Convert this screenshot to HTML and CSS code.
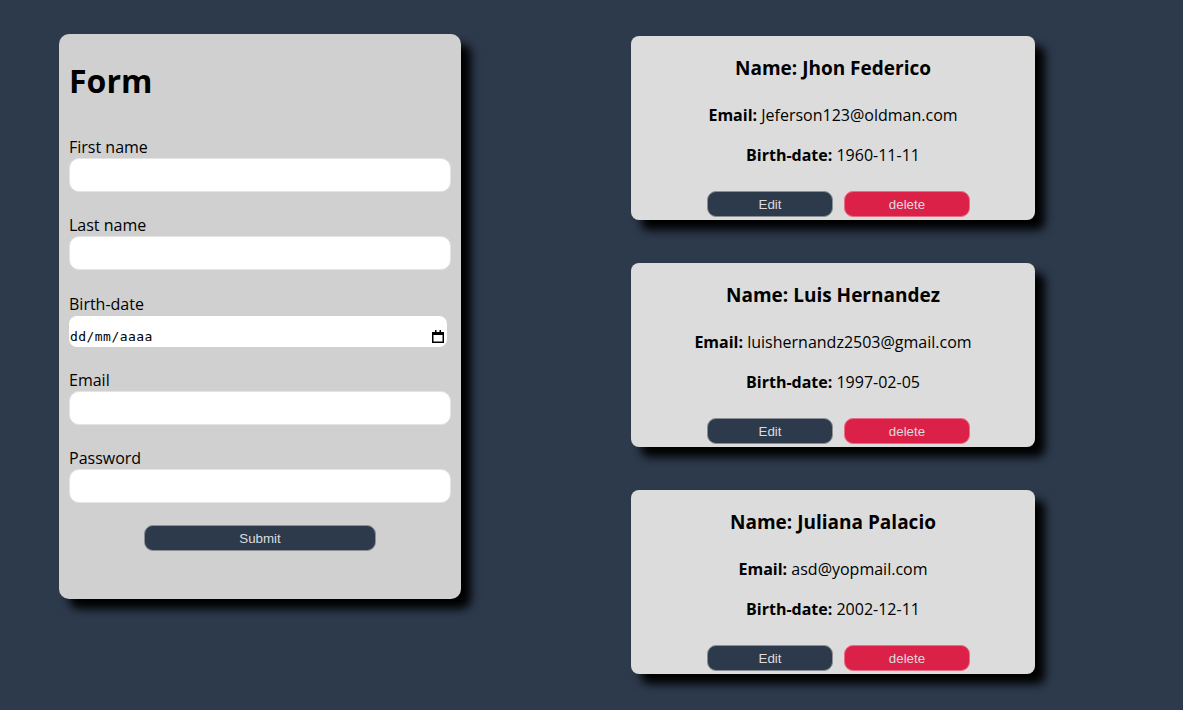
FILE: index.html
```html
<!DOCTYPE html>
<html lang="es">
<head>
<meta charset="utf-8">
<title>Form</title>
<link rel="stylesheet" href="styles.css">
</head>
<body>
<main class="page">
  <form class="form-card">
    <h1 class="form-title">Form</h1>
    <div class="field field-first">
      <label class="field-label">First name</label>
      <input class="text-input" type="text">
    </div>
    <div class="field">
      <label class="field-label">Last name</label>
      <input class="text-input" type="text">
    </div>
    <div class="field field-date">
      <label class="field-label">Birth-date</label>
      <div class="date-input">
        <input class="date-text" type="text" placeholder="dd/mm/aaaa">
        <svg class="cal-icon" width="12" height="13" viewBox="0 0 12 13">
          <rect x="3" y="0" width="1.5" height="3" fill="#000"/>
          <rect x="7.5" y="0" width="1.5" height="3" fill="#000"/>
          <rect x="0" y="2" width="12" height="3" fill="#000"/>
          <rect x="0.75" y="2.75" width="10.5" height="9.5" fill="none" stroke="#000" stroke-width="1.5"/>
        </svg>
      </div>
    </div>
    <div class="field">
      <label class="field-label">Email</label>
      <input class="text-input" type="text">
    </div>
    <div class="field">
      <label class="field-label">Password</label>
      <input class="text-input" type="password">
    </div>
    <div class="submit-row">
      <button class="btn btn-dark btn-submit" type="button">Submit</button>
    </div>
  </form>

  <section class="cards">
    <article class="user-card">
      <h3 class="user-name">Name: Jhon Federico</h3>
      <p class="user-line user-email"><b>Email:</b> Jeferson123@oldman.com</p>
      <p class="user-line user-birth"><b>Birth-date:</b> 1960-11-11</p>
      <div class="card-actions">
        <button class="btn btn-dark btn-card" type="button">Edit</button>
        <button class="btn btn-red btn-card" type="button">delete</button>
      </div>
    </article>
    <article class="user-card">
      <h3 class="user-name">Name: Luis Hernandez</h3>
      <p class="user-line user-email"><b>Email:</b> luishernandz2503@gmail.com</p>
      <p class="user-line user-birth"><b>Birth-date:</b> 1997-02-05</p>
      <div class="card-actions">
        <button class="btn btn-dark btn-card" type="button">Edit</button>
        <button class="btn btn-red btn-card" type="button">delete</button>
      </div>
    </article>
    <article class="user-card">
      <h3 class="user-name">Name: Juliana Palacio</h3>
      <p class="user-line user-email"><b>Email:</b> asd@yopmail.com</p>
      <p class="user-line user-birth"><b>Birth-date:</b> 2002-12-11</p>
      <div class="card-actions">
        <button class="btn btn-dark btn-card" type="button">Edit</button>
        <button class="btn btn-red btn-card" type="button">delete</button>
      </div>
    </article>
  </section>
</main>
</body>
</html>
```

FILE: styles.css
```css
html, body {
  margin: 0;
  padding: 0;
  background: #2d3a4c;
}
body {
  font-family: "Open Sans", "Noto Sans", sans-serif;
  color: #000;
}
.page {
  box-sizing: border-box;
  min-height: 710px;
  display: flex;
  align-items: flex-start;
  gap: 170px;
  padding: 34px 0 0 59px;
}
.form-card {
  box-sizing: border-box;
  width: 402px;
  background: #d0d0d0;
  border-radius: 10px;
  padding: 0 10px 48px;
  box-shadow: 10px 10px 10px #000;
  display: flex;
  flex-direction: column;
}
.form-title {
  margin: 25px 0 0;
  font-size: 32px;
  line-height: 43px;
  font-weight: 700;
}
.field {
  display: flex;
  flex-direction: column;
  margin-top: 23px;
}
.field-first { margin-top: 35px; }
.field-date { margin-top: 24px; }
.field-label {
  font-size: 16px;
  line-height: 21px;
}
.text-input {
  box-sizing: border-box;
  width: 382px;
  height: 34px;
  margin: 0;
  border: 1px solid #e4e4e4;
  border-radius: 10px;
  background: #fff;
  outline: none;
}
.date-input {
  box-sizing: border-box;
  width: 378px;
  height: 31px;
  margin-top: 1px;
  background: #fff;
  border-radius: 8px;
  display: flex;
  align-items: center;
  justify-content: space-between;
  padding: 0 3px 0 1px;
}
.date-text {
  border: none;
  outline: none;
  background: transparent;
  padding: 0;
  margin: 9px 0 0;
  font-family: "DejaVu Sans Mono", "Liberation Mono", monospace;
  font-size: 13px;
  letter-spacing: 0.45px;
  width: 200px;
}
.date-text::placeholder { color: #000; opacity: 1; }
.cal-icon { margin-top: 10px; }
.submit-row {
  display: flex;
  justify-content: center;
  margin-top: 22px;
}
.btn {
  box-sizing: border-box;
  height: 26px;
  border-radius: 9px;
  font-family: "Liberation Sans", Arial, sans-serif;
  font-size: 13.33px;
  color: #dcdcdc;
  padding: 0;
  cursor: pointer;
}
.btn-dark {
  background: #2d3a4c;
  border: 1px solid #8a8f96;
}
.btn-red {
  background: #dc2149;
  border: 1px solid #e76e86;
}
.btn-submit { width: 232px; }
.btn-card { width: 126px; }

.cards {
  display: flex;
  flex-direction: column;
  gap: 43px;
  margin-top: 2px;
}
.user-card {
  box-sizing: border-box;
  width: 404px;
  height: 184px;
  background: #dcdcdc;
  border-radius: 8px;
  box-shadow: 10px 10px 10px #000;
  display: flex;
  flex-direction: column;
  align-items: center;
  text-align: center;
}
.user-name {
  margin: 20px 0 0;
  font-size: 19px;
  line-height: 25px;
  font-weight: 700;
}
.user-line {
  margin: 0;
  font-size: 16px;
  line-height: 21px;
}
.user-line b { font-weight: 700; }
.user-email { margin-top: 24px; }
.user-birth { margin-top: 19px; }
.card-actions {
  display: flex;
  gap: 11px;
  margin-top: 25px;
  padding-left: 11px;
}
```
